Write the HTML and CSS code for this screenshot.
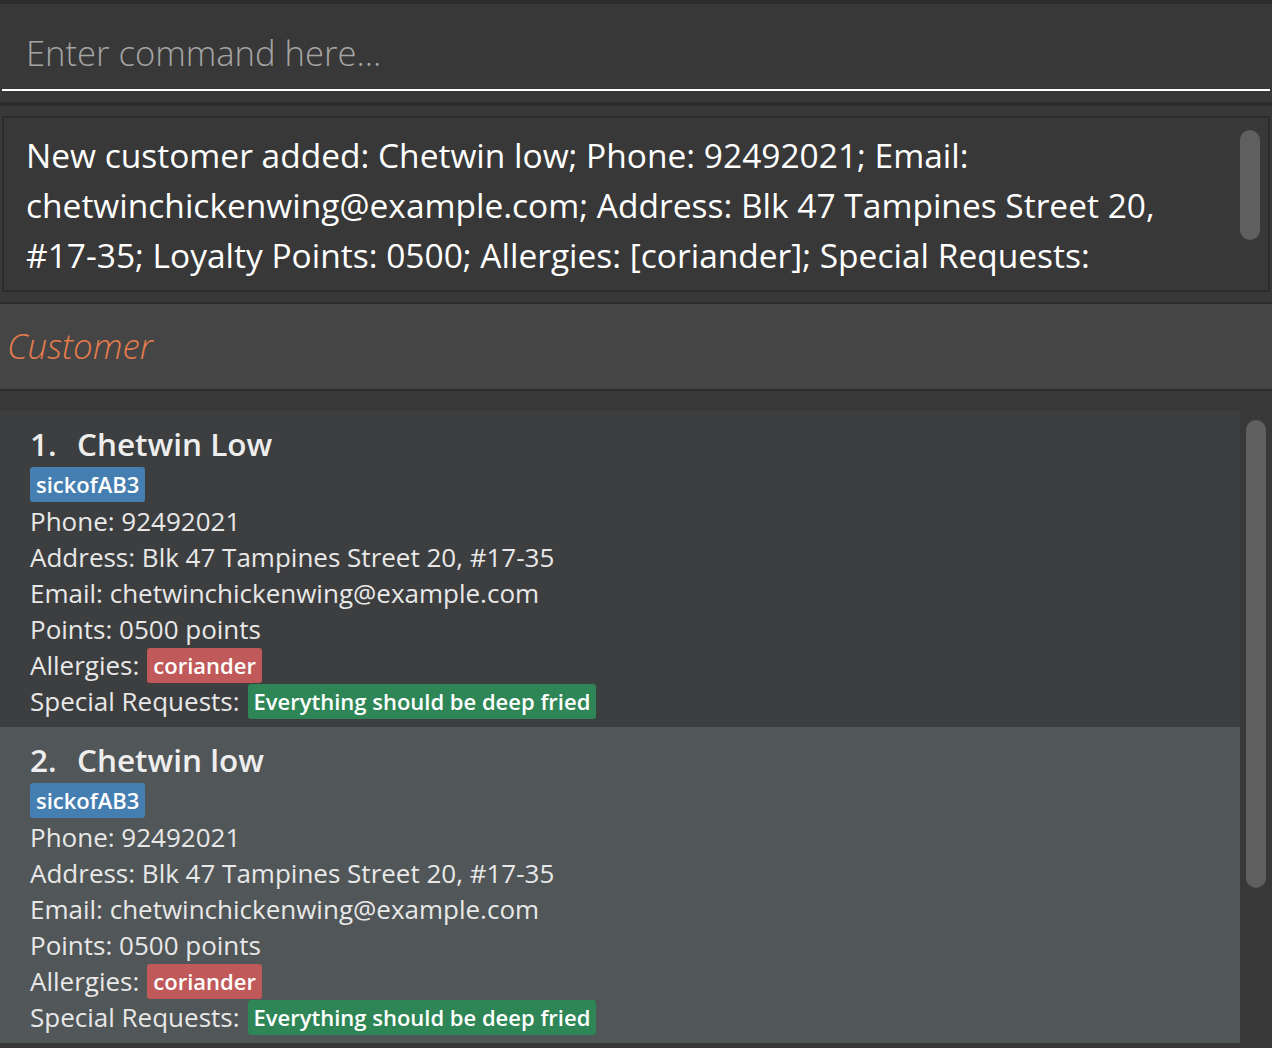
FILE: index.html
```html
<!DOCTYPE html>
<html>
<head>
<meta charset="utf-8">
<link rel="stylesheet" href="styles.css">
</head>
<body>
<div class="app">
  <div class="top-edge"></div>
  <div class="command">
    <div class="command-input">Enter command here...</div>
  </div>
  <div class="sep"></div>
  <div class="result-wrap">
    <div class="result">
      <div class="result-text">New customer added: Chetwin low; Phone: 92492021; Email: chetwinchickenwing@example.com; Address: Blk 47 Tampines Street 20, <span class="nowrap">#17-35;</span> Loyalty Points: 0500; Allergies: [coriander]; Special Requests:</div>
      <div class="result-scroll"><div class="thumb result-thumb"></div></div>
    </div>
  </div>
  <div class="line"></div>
  <div class="header"><span class="header-title">Customer</span></div>
  <div class="line"></div>
  <div class="list-area">
    <div class="list">
      <div class="cell cell-odd">
        <div class="name"><span class="num">1.</span><span>Chetwin Low</span></div>
        <div class="tags"><span class="tag tag-blue">sickofAB3</span></div>
        <div class="row">Phone: 92492021</div>
        <div class="row">Address: Blk 47 Tampines Street 20, #17-35</div>
        <div class="row">Email: chetwinchickenwing@example.com</div>
        <div class="row">Points: 0500 points</div>
        <div class="row"><span>Allergies:</span><span class="tag tag-red">coriander</span></div>
        <div class="row"><span>Special Requests:</span><span class="tag tag-green">Everything should be deep fried</span></div>
      </div>
      <div class="cell cell-even">
        <div class="name"><span class="num">2.</span><span>Chetwin low</span></div>
        <div class="tags"><span class="tag tag-blue">sickofAB3</span></div>
        <div class="row">Phone: 92492021</div>
        <div class="row">Address: Blk 47 Tampines Street 20, #17-35</div>
        <div class="row">Email: chetwinchickenwing@example.com</div>
        <div class="row">Points: 0500 points</div>
        <div class="row"><span>Allergies:</span><span class="tag tag-red">coriander</span></div>
        <div class="row"><span>Special Requests:</span><span class="tag tag-green">Everything should be deep fried</span></div>
      </div>
    </div>
    <div class="list-scroll"><div class="thumb list-thumb"></div></div>
  </div>
</div>
</body>
</html>
```
FILE: styles.css
```css
html, body {
  margin: 0;
  padding: 0;
  background: #383838;
}
body {
  font-family: "Open Sans", "Liberation Sans", sans-serif;
  width: 1272px;
  height: 1048px;
  overflow: hidden;
}
.app {
  display: flex;
  flex-direction: column;
  height: 1048px;
  background: #383838;
}
.top-edge {
  height: 4px;
  background: #2c2c2c;
}
.command {
  height: 98px;
  padding: 0 2px;
  box-sizing: border-box;
}
.command-input {
  height: 87px;
  border-bottom: 2px solid #ffffff;
  box-sizing: border-box;
  padding-left: 24px;
  display: flex;
  align-items: center;
  padding-top: 12px;
  font-size: 34.6px;
  font-weight: 300;
  color: #a5a5a5;
}
.sep {
  height: 4px;
  background: #2c2c2c;
}
.result-wrap {
  padding: 10px 2px;
}
.result {
  height: 176px;
  border: 2px solid #2c2c2c;
  box-sizing: border-box;
  display: flex;
}
.result-text {
  flex: 1;
  padding: 12px 0 0 22px;
  font-size: 33.5px;
  line-height: 50px;
  color: #ffffff;
  font-weight: 400;
}
.nowrap {
  white-space: nowrap;
}
.result-scroll {
  width: 32px;
  padding-top: 12px;
}
.thumb {
  background: #5f5f5f;
  border-radius: 10px;
  width: 20px;
}
.result-thumb {
  height: 110px;
  margin-left: 4px;
}
.line {
  height: 2px;
  background: #2c2c2c;
}
.header {
  height: 85px;
  background: #454545;
  display: flex;
  align-items: center;
  padding-left: 7px;
}
.header-title {
  font-size: 34.8px;
  font-style: italic;
  font-weight: 300;
  color: #e67c4d;
  padding-bottom: 2px;
}
.list-area {
  flex: 1;
  display: flex;
  padding-top: 20px;
  min-height: 0;
}
.list {
  width: 1240px;
}
.list-scroll {
  flex: 1;
  padding: 9px 0 0 6px;
}
.list-thumb {
  height: 468px;
}
.cell {
  height: 316px;
  box-sizing: border-box;
  padding: 13px 0 0 30px;
  color: #e8e8e8;
}
.cell-odd {
  background: #3c3e40;
}
.cell-even {
  background: #515658;
}
.name {
  display: flex;
  font-size: 31.5px;
  font-weight: 600;
  line-height: 40px;
  height: 43px;
  color: #eeeeee;
}
.num {
  width: 47px;
}
.tags {
  height: 36px;
  display: flex;
  align-items: flex-start;
}
.tag {
  display: inline-block;
  height: 35px;
  line-height: 35px;
  padding: 0 6px;
  border-radius: 3px;
  font-size: 22px;
  font-weight: 600;
  color: #ffffff;
}
.tag-blue {
  background: #457eb0;
}
.tag-red {
  background: #c05a5a;
}
.tag-green {
  background: #2e8555;
}
.row {
  display: flex;
  align-items: center;
  gap: 8px;
  height: 36px;
  line-height: 36px;
  font-size: 26px;
  white-space: nowrap;
}
```
